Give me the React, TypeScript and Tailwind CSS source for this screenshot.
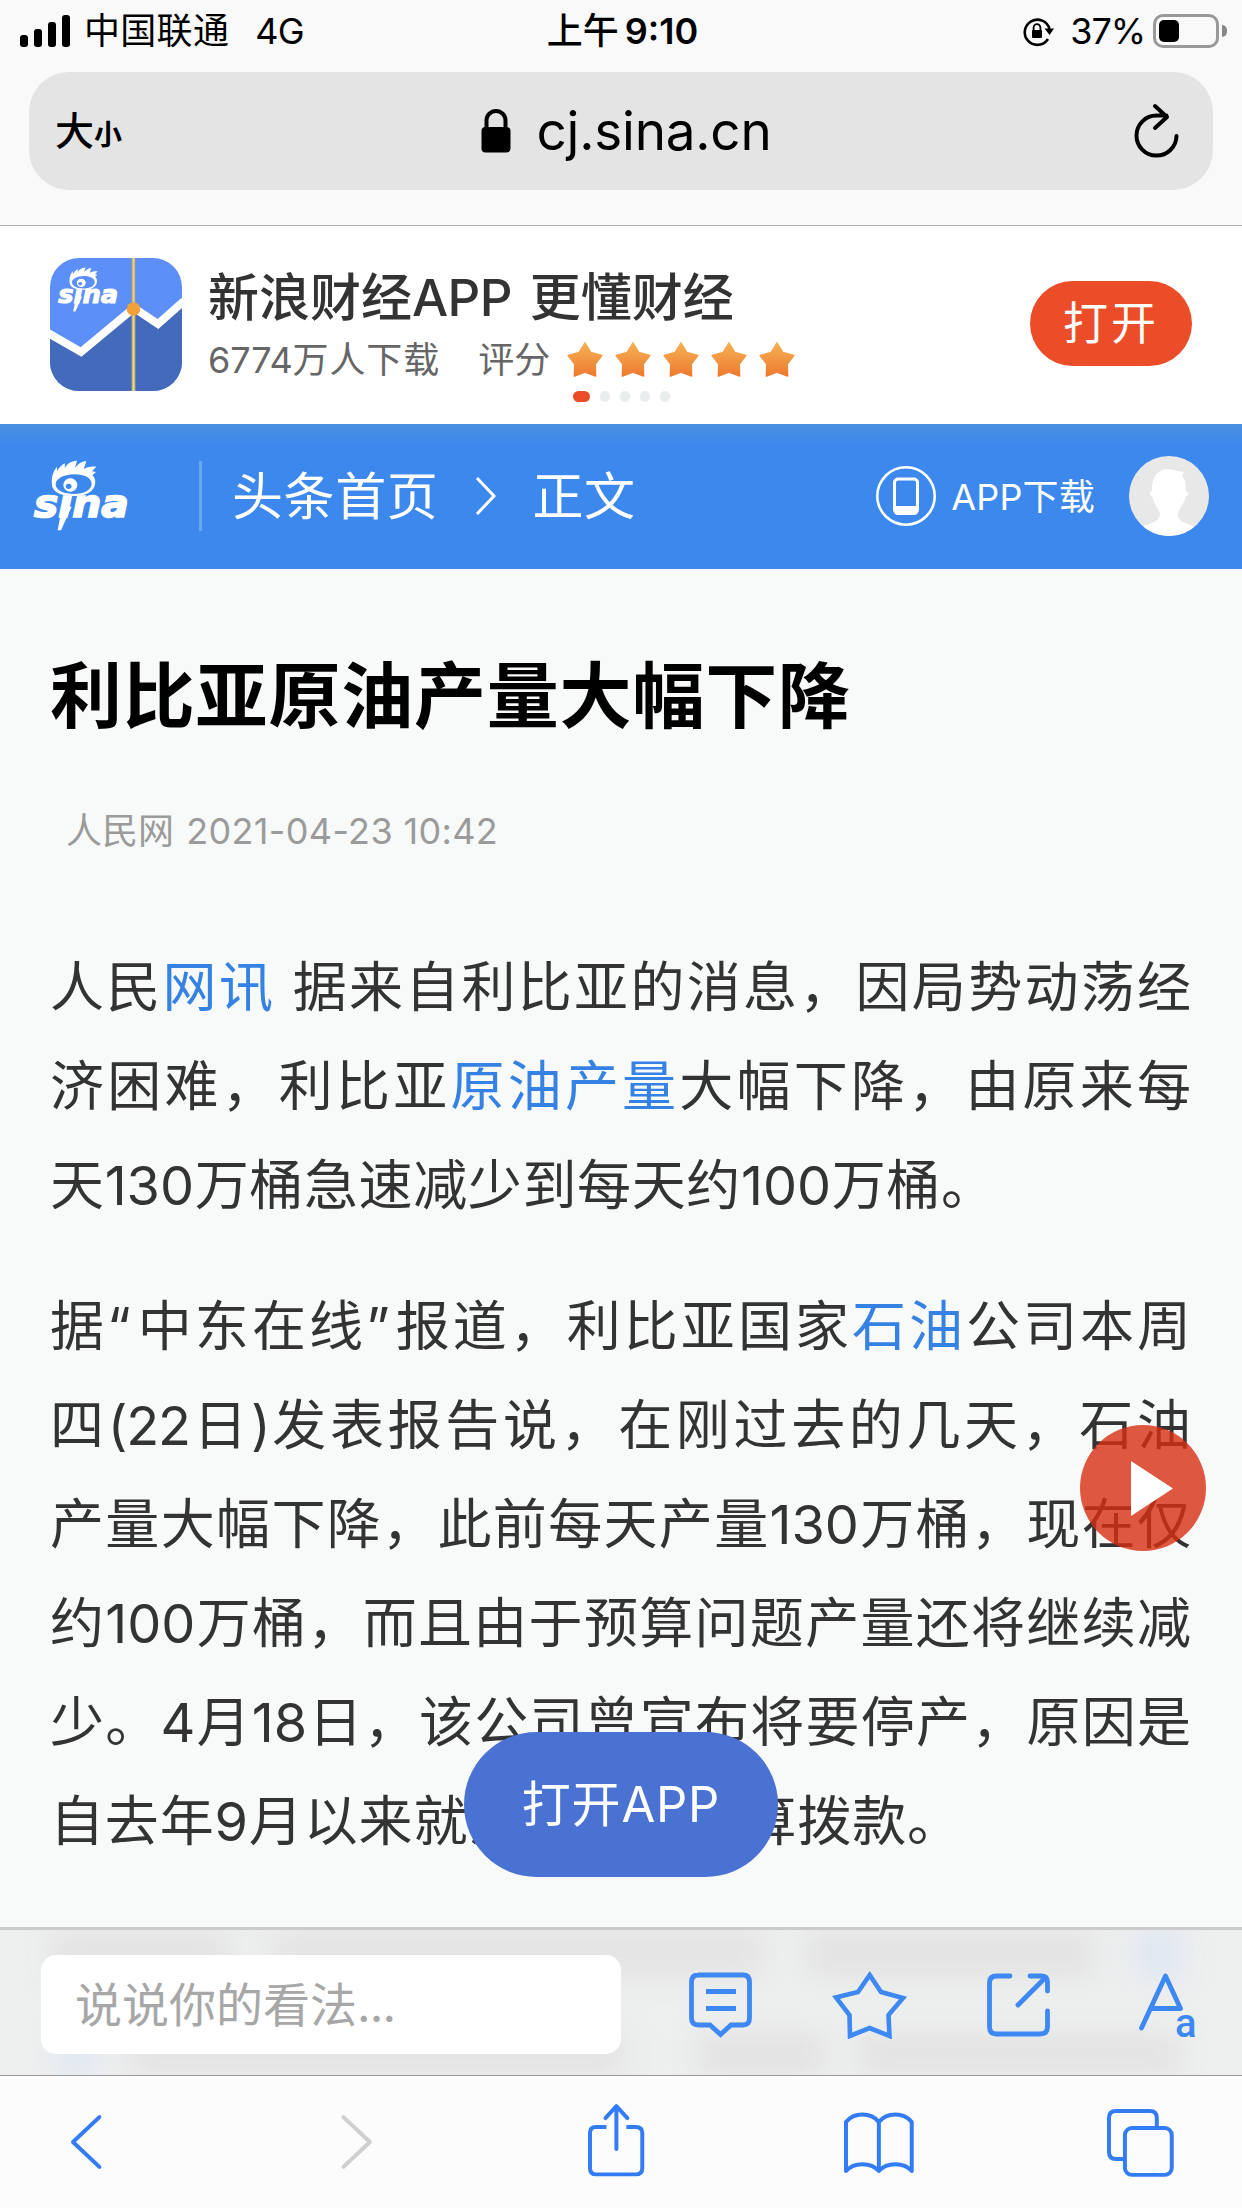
import React from "react";

const Link = ({ children }: { children: React.ReactNode }) => (
  <span className="text-[#3582e4]">{children}</span>
);

function SinaLogo({ className }: { className: string }) {
  return (
    <svg className={className} viewBox="0 0 294 213" fill="#fff">
      <path
        fillRule="evenodd"
        d="M60 76C57 48 66 30 75 20L75 34C80 24 90 14 99 10L98 25C104 12 116 3 135 2L129 24C138 12 150 4 163 4L155 27C163 22 174 19 193 20L180 34L192 36L181 46C190 54 192 66 187 80C180 98 156 108 124 108C88 108 63 98 60 76ZM71 76C75 93 97 102 126 102C156 102 178 90 179 72C179 54 158 43 127 43C95 44 69 56 71 76Z"
      />
      <path
        fillRule="evenodd"
        d="M115 55a21 20 0 1 0 .1 0ZM110 71a9 8 0 1 1-.1 0Z"
      />
      <text
        x="6"
        y="172"
        fontSize="116"
        fontWeight="700"
        fontStyle="italic"
        textLength="284"
        lengthAdjust="spacingAndGlyphs"
        fontFamily="DejaVu Sans"
        stroke="#fff"
        strokeWidth="5"
      >
        sına
      </text>
      <path d="M90 140L119 140L87 211L77 211Z" />
    </svg>
  );
}

function StatusBar() {
  return (
    <div className="flex h-[62px] w-full items-center pl-5 pr-[15px] text-[36px] text-black">
      <div className="flex flex-1 items-center">
        <div className="flex h-8 items-end gap-[6px]">
          <i className="h-3 w-2 rounded-[3px] bg-black" />
          <i className="h-[18px] w-2 rounded-[3px] bg-black" />
          <i className="h-[25px] w-2 rounded-[3px] bg-black" />
          <i className="h-8 w-2 rounded-[3px] bg-black" />
        </div>
        <span className="ml-[14px] tracking-[0.3px]">中国联通</span>
        <span className="ml-[26px] tracking-[-0.8px]">4G</span>
      </div>
      <div className="-ml-[2px] flex items-center gap-[6px] font-medium">
        <span className="text-[36px]">上午</span>
        <span className="text-[36px] font-semibold">9:10</span>
      </div>
      <div className="flex flex-1 items-center justify-end">
        <svg className="mr-4 mt-[2px] h-8 w-8" viewBox="0 0 32 32" fill="none">
          <path d="M26 23A12.6 12.6 0 1 1 27.5 13" stroke="#000" strokeWidth="2.6" />
          <path d="M22.5 12.5h9.5l-4.4 6.5z" fill="#000" />
          <rect x="10" y="14" width="10" height="8" rx="1" fill="#000" />
          <path d="M11.6 15v-3.5a3.4 3.4 0 0 1 6.8 0V15" stroke="#000" strokeWidth="1.8" />
        </svg>
        <span className="tracking-[-1.1px]">37%</span>
        <div className="ml-2 h-[34px] w-[66px] rounded-[10px] border-[3px] border-[#999] p-[3px]">
          <div className="h-[22px] w-5 rounded-[5px] bg-black" />
        </div>
        <div className="ml-[3px] h-3 w-[5px] rounded-r-full bg-[#888]" />
      </div>
    </div>
  );
}

function AddressBar() {
  return (
    <div className="mx-[29px] mt-[10px] flex h-[118px] items-center rounded-[40px] bg-[#e4e4e4] text-black">
      <div className="flex flex-1 items-baseline pl-[26px] font-medium">
        <span className="text-[39px] leading-[60px]">大</span>
        <span className="text-[28px] font-bold">小</span>
      </div>
      <div className="ml-[18px] flex items-center">
        <svg className="h-[44px] w-[30px]" viewBox="0 0 30 44" fill="none">
          <rect x="0.5" y="18" width="29" height="25.5" rx="4" fill="#000" />
          <path d="M5.5 20V11.5a9.5 9.5 0 0 1 19 0V20" stroke="#000" strokeWidth="4" />
        </svg>
        <span className="ml-[25px] text-[53px] leading-[60px] tracking-[-0.2px]">cj.sina.cn</span>
      </div>
      <div className="flex flex-1 justify-end pr-[33px]">
        <svg
          className="h-[56px] w-[46px]"
          viewBox="0 0 46 56"
          fill="none"
          stroke="#000"
          strokeWidth="4"
          strokeLinecap="round"
          strokeLinejoin="round"
        >
          <path d="M42.5 33a20 20 0 1 1-20-20.400h10M21 3l12 11-12 11" />
        </svg>
      </div>
    </div>
  );
}

function AppBanner() {
  return (
    <div className="flex h-[198px] bg-white pl-[50px] pr-[50px]">
      <div className="relative mt-8 h-[133px] w-[132px] overflow-hidden rounded-[29px] bg-[#5c90f8]">
        <svg className="h-full w-full" viewBox="0 0 132 133" fill="none">
          <path d="M0 77L31 94L84 50L108 67L132 45V133H0Z" fill="#446bbb" />
          <path d="M-2 75L31 94L84 50L108 66L134 43" stroke="#fff" strokeWidth="8" />
          <path d="M83.500 0V133" stroke="#a99f7a" strokeWidth="4" />
          <path d="M83.500 0V133" stroke="#ecd685" strokeWidth="2" />
          <circle cx="83.500" cy="51" r="6.800" fill="#f2a03a" />
        </svg>
        <SinaLogo className="absolute left-[7px] top-[9px] h-[45px] w-[62px]" />
      </div>
      <div className="ml-[26px] mt-[41px] flex-1">
        <div className="whitespace-nowrap text-[51px] font-medium leading-[62px] text-[#333]">
          新浪财经<span className="tracking-[-0.6px]">APP</span>
          <span className="ml-[18px]">更懂财经</span>
        </div>
        <div className="flex h-[62px] items-center text-[36px] text-[#666]">
          <span className="tracking-[0.9px]">
            <span className="tracking-[-0.1px]">6774</span>万人下载
          </span>
          <span className="ml-[38px]">评分</span>
          <div className="ml-[17px] flex gap-[12px]">
            {[0, 1, 2, 3, 4].map((n) => (
              <svg key={n} className="h-[36px] w-[36px]" viewBox="0 0 36 36">
                <defs>
                  <linearGradient id="star" x1="0" y1="0" x2="0" y2="1">
                    <stop offset="0" stopColor="#f4b254" />
                    <stop offset="1" stopColor="#ee7a30" />
                  </linearGradient>
                </defs>
                <path
                  fill="url(#star)"
                  stroke="url(#star)"
                  strokeWidth="1.500"
                  strokeLinejoin="round"
                  d="M18 .8L23.800 10.500L34.800 13.500L28.300 22L28.600 34L18 30L7.400 34L7.700 22L1.200 13.500L12.200 10.500Z"
                />
              </svg>
            ))}
          </div>
        </div>
        <div className="ml-[365px] flex gap-[10px]">
          <i className="h-[11px] w-[17px] rounded-full bg-[#eb4d29]" />
          <i className="h-[11px] w-[10px] rounded-full bg-[#eaeded]" />
          <i className="h-[11px] w-[10px] rounded-full bg-[#eaeded]" />
          <i className="h-[11px] w-[10px] rounded-full bg-[#eaeded]" />
          <i className="h-[11px] w-[10px] rounded-full bg-[#eaeded]" />
        </div>
      </div>
      <button className="mt-[55px] h-[85px] w-[162px] rounded-full bg-[#eb4d29] text-[45px] leading-[86px] tracking-[3px] text-white">
        打开
      </button>
    </div>
  );
}

function SiteHeader() {
  return (
    <div className="flex h-[145px] items-center bg-[#3d88ed] bg-[linear-gradient(#4990e0,#3d88ed_22px)] pb-[2px] pl-8 pr-[33px] text-white">
      <SinaLogo className="h-[71px] w-[98px]" />
      <div className="ml-[69px] h-[70px] w-[3px] bg-[#67a8f1]" />
      <span className="ml-[30px] pt-[3px] text-[51px] tracking-[0.6px]">头条首页</span>
      <svg className="ml-[37px] h-[40px] w-[22px]" viewBox="0 0 22 40" fill="none">
        <path d="M2 2L19 20L2 38" stroke="#fff" strokeWidth="3" />
      </svg>
      <span className="ml-[35px] pt-[3px] text-[51px] tracking-[0.6px]">正文</span>
      <svg className="ml-auto h-[60px] w-[60px]" viewBox="0 0 60 60" fill="none">
        <circle cx="30" cy="30" r="28.700" stroke="#fff" strokeWidth="2.600" />
        <rect x="18.500" y="13" width="23" height="34" rx="3.500" stroke="#fff" strokeWidth="3" />
        <path d="M18 40h24v5a4 4 0 0 1-4 4H22a4 4 0 0 1-4-4z" fill="#fff" />
      </svg>
      <span className="ml-[15px] pt-[3px] text-[36px] tracking-[0.2px]">APP下载</span>
      <svg className="ml-[34px] h-[80px] w-[80px]" viewBox="0 0 80 80">
        <defs>
          <clipPath id="avatar">
            <circle cx="40" cy="40" r="40" />
          </clipPath>
        </defs>
        <g clipPath="url(#avatar)">
          <rect width="80" height="80" fill="#e8e8e8" />
          <path
            fill="#fff"
            d="M31 58C31 54 24 47 23.500 41C20 39 20 36 23 35C22 20 30 13 39 13C44 13 48 16 55 16L53 20C57 23 57 29 56.500 35C60 36 60 39 56.500 41C56 47 49 54 49 58C48 66 58 67 66 71L66 82H12L12 71C21 67 31 66 31 58Z"
          />
        </g>
      </svg>
    </div>
  );
}

const Line = ({ children }: { children: React.ReactNode }) => (
  <div className="h-[99px] whitespace-nowrap [text-align-last:justify]">{children}</div>
);

function Article() {
  return (
    <main className="h-[1358px] bg-[#f8faf9] px-[50px] pt-[77px]">
      <h1 className="whitespace-nowrap text-[72px] font-bold leading-[100px] tracking-[0.8px] text-black">
        利比亚原油产量大幅下降
      </h1>
      <div className="mt-[55px] pl-4 text-[36px] leading-[60px] text-[#9b9b9b]">
        人民网 <span className="ml-[2px] tracking-[0.35px]">2021-04-23 10:42</span>
      </div>
      <div className="mt-[77px] w-[1141px] text-[54px] leading-[99px] text-[#333]">
        <Line>
          人民<Link>网讯</Link> 据来自利比亚的消息，因局势动荡经
        </Line>
        <Line>
          济困难，利比亚<Link>原油产量</Link>大幅下降，由原来每
        </Line>
        <div className="h-[99px] w-[945px] whitespace-nowrap [text-align-last:justify]">
          天130万桶急速减少到每天约100万桶。
        </div>
        <div className="mt-[42px]">
          <Line>
            据<span className="mr-[4px]">“</span>中东在线<span className="mr-[3px]">”</span>
            报道，利比亚国家<Link>石油</Link>公司本周
          </Line>
          <Line>
            四<span className="tracking-[-1.200px]">(22</span>日<span className="-mr-[2px]">)</span>
            发表报告说，在刚过去的几天，石油
          </Line>
          <Line>产量大幅下降，此前每天产量130万桶，现在仅</Line>
          <Line>约100万桶，而且由于预算问题产量还将继续减</Line>
          <Line>少。4月18日，该公司曾宣布将要停产，原因是</Line>
          <div className="h-[99px] w-[911px] whitespace-nowrap [text-align-last:justify]">
            自去年9月以来就没有得到预算拨款。
          </div>
        </div>
      </div>
    </main>
  );
}

function CommentBar() {
  return (
    <div className="relative h-[148px] overflow-hidden border-t-[3px] border-[#cbcbcb] bg-[#eeefef]">
      <div className="absolute inset-0 flex flex-col justify-between blur-[14px]">
        <div className="ml-[50px] mr-[60px] flex h-[48px] gap-[40px]">
          <i className="w-[180px] bg-[#e3e3e3]" />
          <i className="flex-1 bg-[#e4e4e4]" />
          <i className="w-[290px] bg-[#e3e3e3]" />
          <i className="w-[46px] bg-[#dee6f2]" />
        </div>
        <div className="ml-[60px] mr-[60px] flex h-[42px] gap-[30px]">
          <i className="w-[36px] bg-[#dee6f2]" />
          <i className="w-[500px] bg-[#e3e3e3]" />
          <i className="ml-[40px] w-[130px] bg-[#e2e2e2]" />
          <i className="flex-1 bg-[#e3e3e3]" />
        </div>
      </div>
      <div className="relative flex h-full items-center pl-[41px] pr-[42px]">
        <div className="mt-[3px] h-[99px] w-[580px] rounded-[15px] bg-white pl-[34px] text-[47px] leading-[99px] text-[#a7a7a7]">
          说说你的看法<span className="tracking-[-0.8px]">...</span>
        </div>
        <svg className="ml-[65px] h-[72px] w-[70px]" viewBox="0 0 70 72" fill="none" stroke="#3d88f2" strokeWidth="4.800">
          <path d="M12 8H57Q63.500 8 63.500 15V51Q63.500 58 57 58H45L34.500 67.500L24 58H12.500Q5.500 58 5.500 51V15Q5.500 8 12.500 8Z" />
          <path d="M20 24.500H50M20 41.500H50" strokeWidth="5" />
        </svg>
        <svg className="ml-[74px] h-[72px] w-[80px]" viewBox="0 0 80 72" fill="none" stroke="#3d88f2" strokeWidth="4.600">
          <path d="M39.700 8L51 25L73 31L58.500 48L59.500 69L39.500 61L20 69L19.500 48L6 30.500L28 25Z" />
        </svg>
        <svg
          className="ml-[74px] h-[72px] w-[70px]"
          viewBox="0 0 70 72"
          fill="none"
          stroke="#3d88f2"
          strokeWidth="4.800"
          strokeLinecap="round"
          strokeLinejoin="round"
        >
          <path d="M26 9H12.500Q5.500 9 5.500 16V60Q5.500 67 12.500 67H56Q63.500 67 63.500 60V44M46 9H57Q63.500 9 63.500 15V24M61 11L34 38" />
        </svg>
        <svg className="ml-auto h-[72px] w-[62px]" viewBox="0 0 62 72" fill="none">
          <path
            d="M3.500 61L27.500 9L42.500 41.500H13"
            stroke="#3d88f2"
            strokeWidth="4.800"
            strokeLinecap="round"
            strokeLinejoin="round"
          />
          <text x="37" y="70" fontSize="40" fontWeight="500" fontFamily="Roboto" fill="#3d88f2">
            a
          </text>
        </svg>
      </div>
    </div>
  );
}

function BrowserToolbar() {
  return (
    <nav className="flex h-[133px] border-t border-[#999] bg-[#fcfcfc] px-[67px] pt-[26px]">
      <svg className="h-[76px] w-[38px]" viewBox="0 0 38 76" fill="none" stroke="#347bf6" strokeWidth="4" strokeLinecap="round" strokeLinejoin="round">
        <path d="M32.500 15L6 40L32.500 65" />
      </svg>
      <svg className="ml-[233px] h-[76px] w-[38px]" viewBox="0 0 38 76" fill="none" stroke="#cfcfcf" strokeWidth="4" strokeLinecap="round" strokeLinejoin="round">
        <path d="M5.500 15L32 40L5.500 65" />
      </svg>
      <svg className="ml-[210px] h-[76px] w-[60px]" viewBox="0 0 60 76" fill="none" stroke="#347bf6" strokeWidth="4">
        <path d="M20.500 25H10Q4 25 4 31V66Q4 72.500 10 72.500H50Q56.500 72.500 56.500 66V31Q56.500 25 50 25H40.500" />
        <path d="M30.500 47V4M19.500 16L30.500 4L41.500 16" strokeLinecap="round" strokeLinejoin="round" />
      </svg>
      <svg className="ml-[196px] h-[76px] w-[74px]" viewBox="0 0 74 76" fill="none" stroke="#347bf6" strokeWidth="4" strokeLinejoin="round">
        <path d="M37 69V20C29 10 12 10 4 20V69C12 60 29 60 37 69C45 60 62 60 70 69V20C62 10 45 10 37 20" />
      </svg>
      <svg className="ml-[190px] h-[76px] w-[70px]" viewBox="0 0 70 76" fill="none" stroke="#347bf6" strokeWidth="4">
        <path d="M19 57H11Q4 57 4 50V16Q4 9 11 9H45Q52 9 52 16V25" />
        <rect x="20" y="26" width="47" height="47" rx="7" />
      </svg>
    </nav>
  );
}

export default function App() {
  return (
    <div className="relative h-[2208px] w-[1242px] overflow-hidden bg-[#f9f9f9] font-['Inter','Noto_Sans_CJK_SC',sans-serif]">
      <div className="h-[226px] overflow-hidden border-b border-[#b0b0b0]">
        <StatusBar />
        <AddressBar />
      </div>
      <AppBanner />
      <SiteHeader />
      <Article />
      <CommentBar />
      <BrowserToolbar />
      <button
        aria-label="播放"
        className="absolute left-[1080px] top-[1425px] flex h-[126px] w-[126px] items-center justify-center rounded-full bg-[#d72e11]/80"
      >
        <svg className="ml-[18px] h-[55px] w-[42px]" viewBox="0 0 42 55">
          <path d="M0 0L42 27.500L0 55Z" fill="#fff" />
        </svg>
      </button>
      <button className="absolute left-[464px] top-[1732px] h-[145px] w-[314px] rounded-full bg-[#4a72d2] text-[49px] leading-[145px] tracking-[0.800px] text-white">
        打开APP
      </button>
    </div>
  );
}
